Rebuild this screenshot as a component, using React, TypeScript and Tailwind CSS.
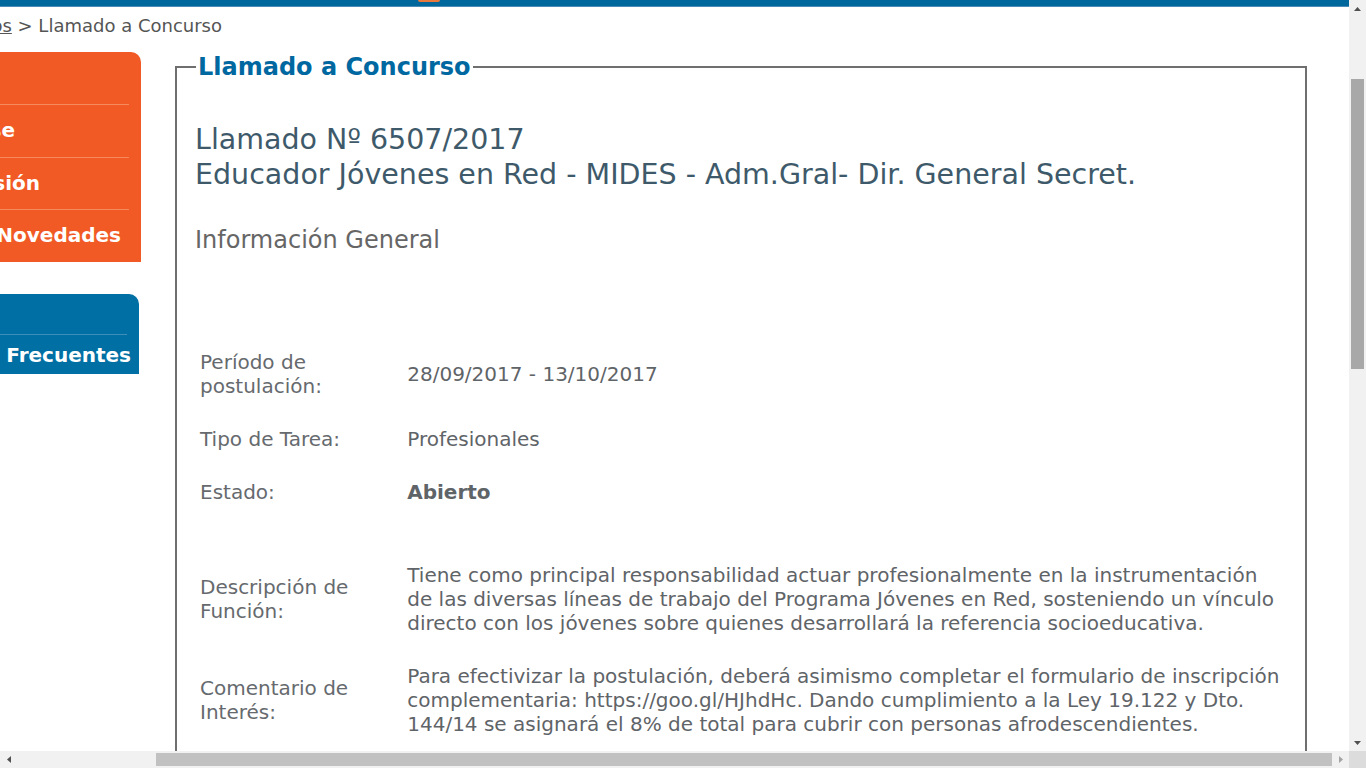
import React from 'react';

const rows = [
    { label: ['Período de', 'postulación:'], value: ['28/09/2017 - 13/10/2017'] },
    { label: ['Tipo de Tarea:'], value: ['Profesionales'] },
    { label: ['Estado:'], value: ['Abierto'], bold: true },
    { spacer: true },
    {
        label: ['Descripción de', 'Función:'],
        value: [
            'Tiene como principal responsabilidad actuar profesionalmente en la instrumentación',
            'de las diversas líneas de trabajo del Programa Jóvenes en Red, sosteniendo un vínculo',
            'directo con los jóvenes sobre quienes desarrollará la referencia socioeducativa.',
        ],
    },
    {
        label: ['Comentario de', 'Interés:'],
        value: [
            'Para efectivizar la postulación, deberá asimismo completar el formulario de inscripción',
            'complementaria: https://goo.gl/HJhdHc. Dando cumplimiento a la Ley 19.122 y Dto.',
            '144/14 se asignará el 8% de total para cubrir con personas afrodescendientes.',
        ],
    },
];

const Arrow: React.FC<{ dir: 'up' | 'down' | 'left' | 'right'; color: string }> = ({ dir, color }) => {
    const pts = {
        up: '0,4 7,4 3.5,0',
        down: '0,0 7,0 3.5,4',
        left: '4,0 4,7 0,3.5',
        right: '0,0 0,7 4,3.5',
    }[dir];
    const vertical = dir === 'up' || dir === 'down';
    return (
        <svg width={vertical ? 7 : 4} height={vertical ? 4 : 7} viewBox={vertical ? '0 0 7 4' : '0 0 4 7'}>
            <polygon points={pts} fill={color} />
        </svg>
    );
};

// menu entries are scrolled partly out of view; the visible end of each label is what counts
const SideMenu = () => (
    <div className="w-[261px] flex flex-col text-white font-bold text-[20px]">
        <div className="bg-[#f15a24] rounded-tr-[10px]">
            <div className="h-[53px] border-b border-[#f58a5c] mr-[12px]" />
            <div className="h-[52px] pb-[2px] flex items-center justify-end pr-[126px] whitespace-nowrap">
                <span className="flex-none">Inscribirse</span>
            </div>
            <div className="border-t border-[#f58a5c] mr-[12px]" />
            <div className="h-[51px] pb-[2px] flex items-center justify-end pr-[101px] whitespace-nowrap">
                <span className="flex-none">Iniciar sesión</span>
            </div>
            <div className="border-t border-[#f58a5c] mr-[12px]" />
            <div className="h-[52px] pb-[2px] flex items-center justify-end pr-[20px] whitespace-nowrap">
                <span className="flex-none">Noticias y Novedades</span>
            </div>
        </div>
        <div className="mt-[32px] w-[259px] bg-[#0070a4] rounded-tr-[10px]">
            <div className="h-[41px] border-b border-[#3d8fba] mr-[12px]" />
            <div className="h-[39px] flex items-center justify-end pr-[8px] whitespace-nowrap">
                <span className="flex-none">Preguntas Frecuentes</span>
            </div>
        </div>
    </div>
);

export default function App() {
    return (
        <div className="w-[1366px] h-[768px] flex flex-col overflow-hidden bg-white font-['DejaVu_Sans',Verdana,sans-serif]">
            <div className="flex flex-1 min-h-0">
                <div className="flex-1 min-w-0 overflow-hidden">
                    <div className="h-[7px] bg-[#00679c] border-b border-[#4a8cb8] flex">
                        <div className="ml-[418px] w-[22px] h-[2px] bg-[#e8783c] rounded-b-sm" />
                    </div>

                    <div className="-ml-[120px] w-[1469px]">
                        {/* breadcrumb, right end pinned */}
                        <div className="w-[342px] h-[37px] flex items-center justify-end whitespace-nowrap text-[18px] text-[#555]">
                            <span className="flex-none underline">Inicio</span>
                            <span className="flex-none">&nbsp;&gt;&nbsp;</span>
                            <span className="flex-none underline">Llamados</span>
                            <span className="flex-none">&nbsp;&gt; Llamado a Concurso</span>
                        </div>

                        <div className="mt-[8px] flex items-start">
                            <SideMenu />

                            <fieldset className="ml-[34px] w-[1132px] border-2 border-[#6f6f6f] px-[18px] pb-[40px]">
                                <legend className="ml-[1px] px-[2px] text-[24px] leading-[30px] font-bold text-[#0068a0]">
                                    Llamado a Concurso
                                </legend>

                                <div className="mt-[40px] text-[28.5px] leading-[35px] text-[#3e5a6a] whitespace-nowrap">
                                    Llamado Nº 6507/2017
                                    <br />
                                    Educador Jóvenes en Red - MIDES - Adm.Gral- Dir. General Secret.
                                </div>

                                <div className="mt-[34px] text-[24px] leading-[29px] text-[#666]">Información General</div>

                                <table className="mt-[80px] ml-[5px] border-collapse text-[20px] leading-[24px]">
                                    <tbody>
                                        {rows.map((r, i) =>
                                            r.spacer ? (
                                                <tr key={i}>
                                                    <td colSpan={2} className="h-[30px]" />
                                                </tr>
                                            ) : (
                                                <tr key={i}>
                                                    <td className="w-[209px] py-[14.5px] align-middle text-[#666a6e] whitespace-nowrap">
                                                        {r.label!.map((l, j) => (
                                                            <div key={j}>{l}</div>
                                                        ))}
                                                    </td>
                                                    <td
                                                        className={`w-[880px] py-[14.5px] align-middle text-[#5f6468] whitespace-nowrap ${
                                                            r.bold ? 'font-bold' : ''
                                                        }`}
                                                    >
                                                        {r.value!.map((l, j) => (
                                                            <div key={j}>{l}</div>
                                                        ))}
                                                    </td>
                                                </tr>
                                            )
                                        )}
                                    </tbody>
                                </table>
                            </fieldset>
                        </div>
                    </div>
                </div>

                {/* vertical scrollbar */}
                <div className="w-[17px] bg-[#f1f1f1] flex flex-col items-center">
                    <div className="h-[17px] flex items-center justify-center">
                        <Arrow dir="up" color="#505050" />
                    </div>
                    <div className="mt-[62px] w-[13px] h-[290px] bg-[#a8a8a8]" />
                    <div className="flex-1" />
                    <div className="h-[17px] flex items-center justify-center">
                        <Arrow dir="down" color="#505050" />
                    </div>
                </div>
            </div>

            {/* horizontal scrollbar */}
            <div className="h-[17px] flex bg-[#f1f1f1]">
                <div className="w-[17px] flex items-center justify-center">
                    <Arrow dir="left" color="#505050" />
                </div>
                <div className="flex-1" />
                <div className="w-[1176px] my-[2px] bg-[#c1c1c1]" />
                <div className="w-[17px] flex items-center justify-center">
                    <Arrow dir="right" color="#a3a3a3" />
                </div>
                <div className="w-[17px] bg-[#dcdcdc]" />
            </div>
        </div>
    );
}
